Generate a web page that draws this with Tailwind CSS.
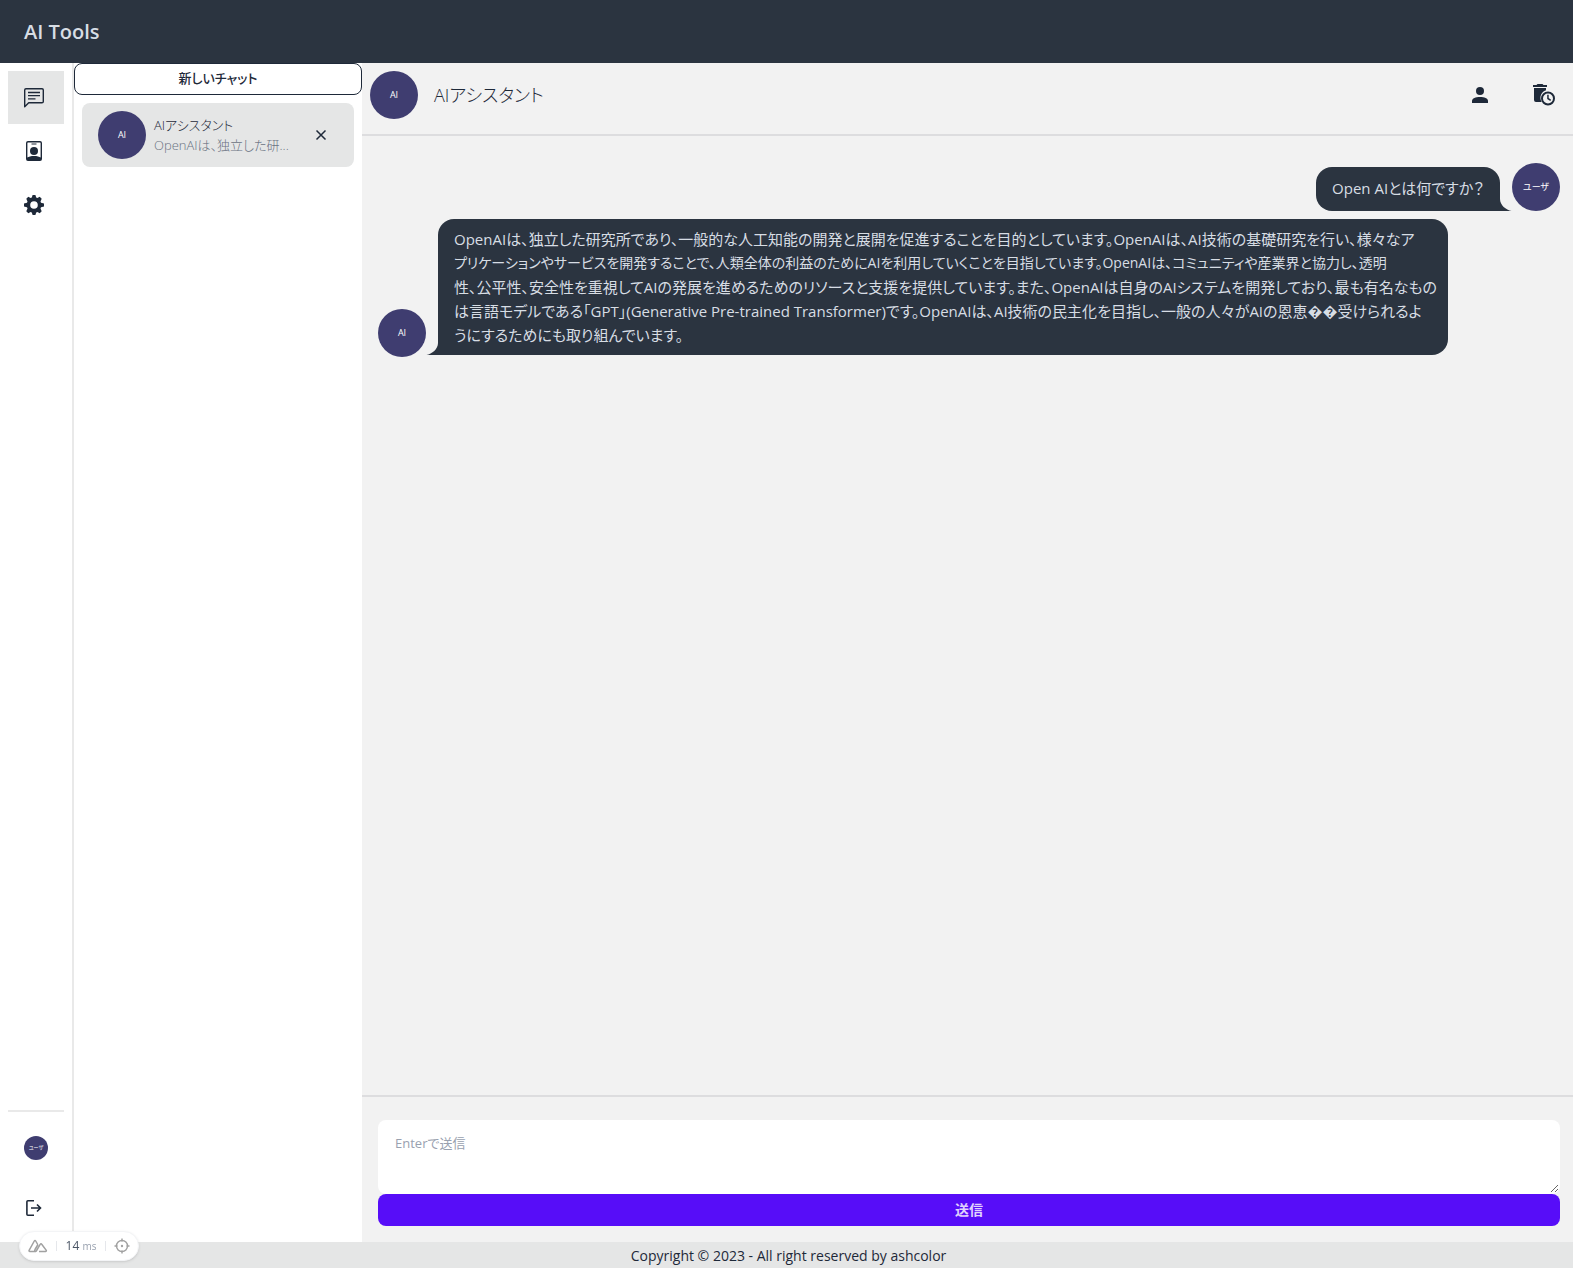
<!DOCTYPE html>
<html lang="ja">
<head>
<meta charset="utf-8">
<meta name="viewport" content="width=device-width, initial-scale=1">
<title>AI Tools</title>
<script src="https://cdn.jsdelivr.net/npm/@tailwindcss/browser@4"></script>
</head>
<body class="flex min-h-screen flex-col bg-white text-gray-800 font-['Open_Sans','Noto_Sans_CJK_JP',sans-serif] [font-feature-settings:'palt']">
  <header class="flex h-[63px] shrink-0 items-center bg-[#2b3440] px-6">
    <a href="#" class="text-xl font-semibold text-[#d7dde4]">AI Tools</a>
  </header>

  <div class="flex grow">
    <nav class="flex w-[74px] shrink-0 flex-col border-r-2 border-[#e9e9e9] p-2" aria-label="メイン">
      <a href="#" aria-label="チャット" class="flex h-[53px] items-center bg-[#e5e6e6] pl-3.5">
        <svg class="size-6" viewBox="0 0 24 24" fill="none" stroke="currentColor" stroke-width="1.4" stroke-linejoin="round"><path d="M4 2.700h16c.8 0 1.300.5 1.300 1.300v11.500c0 .8-.5 1.300-1.300 1.300H6.700l-4 4V4c0-.8.5-1.300 1.300-1.300z"/><path d="M6 6.500h12M6 9.600h12M6 12.900h7.500"/></svg>
      </a>
      <a href="#" aria-label="アシスタント" class="flex h-[54px] items-center pl-3.5">
        <svg class="size-6" viewBox="0 0 24 24" fill="currentColor"><path fill-rule="evenodd" d="M6 2h12a2 2 0 0 1 2 2v16a2 2 0 0 1-2 2H6a2 2 0 0 1-2-2V4a2 2 0 0 1 2-2zm0 1.500a.6.6 0 0 0-.6.6v14.400C6.500 17.700 9 17 12 17s5.500.7 6.600 1.500V4.100a.6.6 0 0 0-.6-.6z"/><path d="M9.500 4.500h5v1h-5z"/><circle cx="12" cy="12" r="4"/></svg>
      </a>
      <a href="#" aria-label="設定" class="flex h-[54px] items-center pl-3.5">
        <svg class="size-6" viewBox="0 0 24 24" fill="currentColor"><path fill-rule="evenodd" d="M10.600 2h2.800l.8 2.500 1.200.5 2.300-1.200 2 2L18.500 8.500l.5 1.200 3 .9v2.800l-3 .9-.5 1.200 1.200 2.700-2 2-2.300-1.200-1.200.5-.8 2.500h-2.800l-.8-2.500-1.200-.5-2.300 1.200-2-2 1.200-2.700-.5-1.200-3-.9v-2.800l3-.9.5-1.200L4.300 5.800l2-2L8.600 5l1.200-.5zM12 8.200a3.800 3.800 0 1 0 0 7.600 3.800 3.800 0 0 0 0-7.600z"/></svg>
      </a>
      <div class="mt-auto border-t-2 border-[#e9e9e9]"></div>
      <button type="button" aria-label="ユーザ" class="mx-4 mt-6 flex size-6 items-center justify-center rounded-full bg-[#3f3d70] text-[5px] text-white">ユーザ</button>
      <button type="button" aria-label="ログアウト" class="mt-8 mb-2.5 flex h-8 items-center pl-3.5">
        <svg class="size-6" viewBox="0 0 24 24" fill="none" stroke="currentColor" stroke-width="1.600"><path d="M12 4.800H5.900a1 1 0 0 0-1 1v12.400a1 1 0 0 0 1 1H12M9 12h9.500M15 8.500l3.500 3.500-3.500 3.500"/></svg>
      </button>
    </nav>

    <aside class="w-72 shrink-0">
      <button type="button" class="h-8 w-full rounded-lg border border-gray-800 text-[13px] font-medium">新しいチャット</button>
      <div class="m-2 flex h-16 items-center rounded-lg bg-[#e5e6e6] pr-[23px] pl-4">
        <div class="flex size-12 shrink-0 items-center justify-center rounded-full bg-[#3f3d70] text-[9px] text-white">AI</div>
        <div class="ml-2 text-[13px] leading-5 font-light whitespace-nowrap">
          <p>AIアシスタント</p>
          <p class="text-gray-500">OpenAIは、独立した研...</p>
        </div>
        <button type="button" aria-label="閉じる" class="ml-auto">
          <svg class="size-5" viewBox="0 0 20 20" fill="none" stroke="currentColor" stroke-width="1.500"><path d="M5.500 5.500l9 9M14.500 5.500l-9 9"/></svg>
        </button>
      </div>
    </aside>

    <main class="flex min-w-0 grow flex-col bg-[#f2f2f2]">
      <div class="flex h-[73px] items-center border-b-2 border-[#dddddf] pr-[17px] pb-2 pl-2">
        <div class="flex size-12 items-center justify-center rounded-full bg-[#3f3d70] text-[9px] text-white">AI</div>
        <h1 class="ml-4 text-lg font-light">AIアシスタント</h1>
        <button type="button" aria-label="プロフィール" class="ml-auto">
          <svg class="size-6" viewBox="0 0 24 24" fill="currentColor"><circle cx="12" cy="8" r="4"/><path d="M4 20v-2c0-2.600 3.600-4 8-4s8 1.400 8 4v2z"/></svg>
        </button>
        <button type="button" aria-label="履歴を削除" class="ml-10">
          <svg class="size-6" viewBox="0 0 24 24" fill="currentColor"><path d="M1 2h3.500l1-1h5l1 1H15v2H1zM2 5h12v2.300a7.800 7.800 0 0 0-4.300 11.700H4a2 2 0 0 1-2-2z"/><path fill-rule="evenodd" d="M16 8.500a7 7 0 1 1 0 14 7 7 0 0 1 0-14zm0 2a5 5 0 1 0 0 10 5 5 0 0 0 0-10z"/><path d="M15.200 11.800h1.500v3.300l2.400 1.600-.8 1.200-3.100-2z"/></svg>
        </button>
      </div>

      <div class="flex grow flex-col gap-2 py-[27px] pr-[13px] pl-4 text-[15px] leading-6 text-[#d7dde4]">
        <div class="flex items-end justify-end">
          <p class="flex h-11 items-center rounded-2xl rounded-br-none bg-[#2b3440] px-4 pb-0.5">Open AIとは何ですか？</p>
          <svg class="h-4 w-3" viewBox="0 0 12 16" fill="#2b3440"><path d="M0 0v16h11.500C6 15 0 10 0 4z"/></svg>
          <div class="flex size-12 items-center justify-center rounded-full bg-[#3f3d70] text-[9px] text-white">ユーザ</div>
        </div>
        <div class="flex items-end">
          <div class="flex size-12 shrink-0 items-center justify-center rounded-full bg-[#3f3d70] text-[9px] text-white">AI</div>
          <div class="mb-0.5 flex items-end">
            <svg class="h-4 w-3 shrink-0" viewBox="0 0 12 16" fill="#2b3440"><path d="M12 0v16H.5C6 15 12 10 12 4z"/></svg>
            <p class="w-[1010px] rounded-2xl rounded-bl-none bg-[#2b3440] py-2 pl-4 whitespace-nowrap">OpenAIは、独立した研究所であり、一般的な人工知能の開発と展開を促進することを目的としています。OpenAIは、AI技術の基礎研究を行い、様々なア<span class="block text-sm leading-6">プリケーションやサービスを開発することで、人類全体の利益のためにAIを利用していくことを目指しています。OpenAIは、コミュニティや産業界と協力し、透明</span>性、公平性、安全性を重視してAIの発展を進めるためのリソースと支援を提供しています。また、OpenAIは自身のAIシステムを開発しており、最も有名なもの<br>は言語モデルである「GPT」(Generative Pre-trained Transformer)です。OpenAIは、AI技術の民主化を目指し、一般の人々がAIの恩恵��受けられるよ<br>うにするためにも取り組んでいます。</p>
          </div>
        </div>
      </div>

      <form class="flex flex-col border-t-2 border-[#dddddf] pt-[23px] pr-[13px] pb-4 pl-4">
        <textarea aria-label="メッセージ" rows="2" placeholder="Enterで送信" class="block h-[74px] w-full rounded-lg border border-transparent bg-white px-4 py-2 text-[13px] leading-7 placeholder:text-gray-400"></textarea>
        <button type="submit" class="h-8 rounded-lg bg-[#570df8] text-sm font-bold text-[#e0d2fe]">送信</button>
      </form>
    </main>
  </div>

  <footer class="flex h-[26px] shrink-0 items-center justify-center bg-[#e5e6e6] pt-0.5 pl-1 text-sm">
    <p>Copyright © 2023 - All right reserved by ashcolor</p>
  </footer>

  <div class="fixed bottom-[7px] left-[19px] flex h-[30px] w-[120px] items-center justify-between rounded-full border border-gray-100 bg-white px-2 text-xs text-gray-600 shadow-sm">
    <svg class="h-5 w-5 text-neutral-400" viewBox="0 0 20 20" fill="none" stroke="currentColor" stroke-width="1.500" stroke-linejoin="round"><path d="M8 15.500H1.800a.8.8 0 0 1-.7-1.200L6.300 5a.8.8 0 0 1 1.400 0l2 3.500M8 15.500l4.300-7.300a.8.8 0 0 1 1.400 0l4.600 6.200a.8.8 0 0 1-.7 1.100H11M8 15.500c-1.500 0-1.500-1-1-2l3-5"/></svg>
    <span class="h-2.5 w-px bg-gray-200"></span>
    <span>14 <small class="text-[10px] text-gray-400">ms</small></span>
    <span class="h-2.5 w-px bg-gray-200"></span>
    <svg class="h-4 w-4 text-neutral-400" viewBox="0 0 16 16" fill="none" stroke="currentColor" stroke-width="1.400"><circle cx="8" cy="8" r="5.500"/><circle cx="8" cy="8" r=".5"/><path d="M8 .5v3M8 12.500v3M.5 8h3M12.500 8h3"/></svg>
  </div>
</body>
</html>
